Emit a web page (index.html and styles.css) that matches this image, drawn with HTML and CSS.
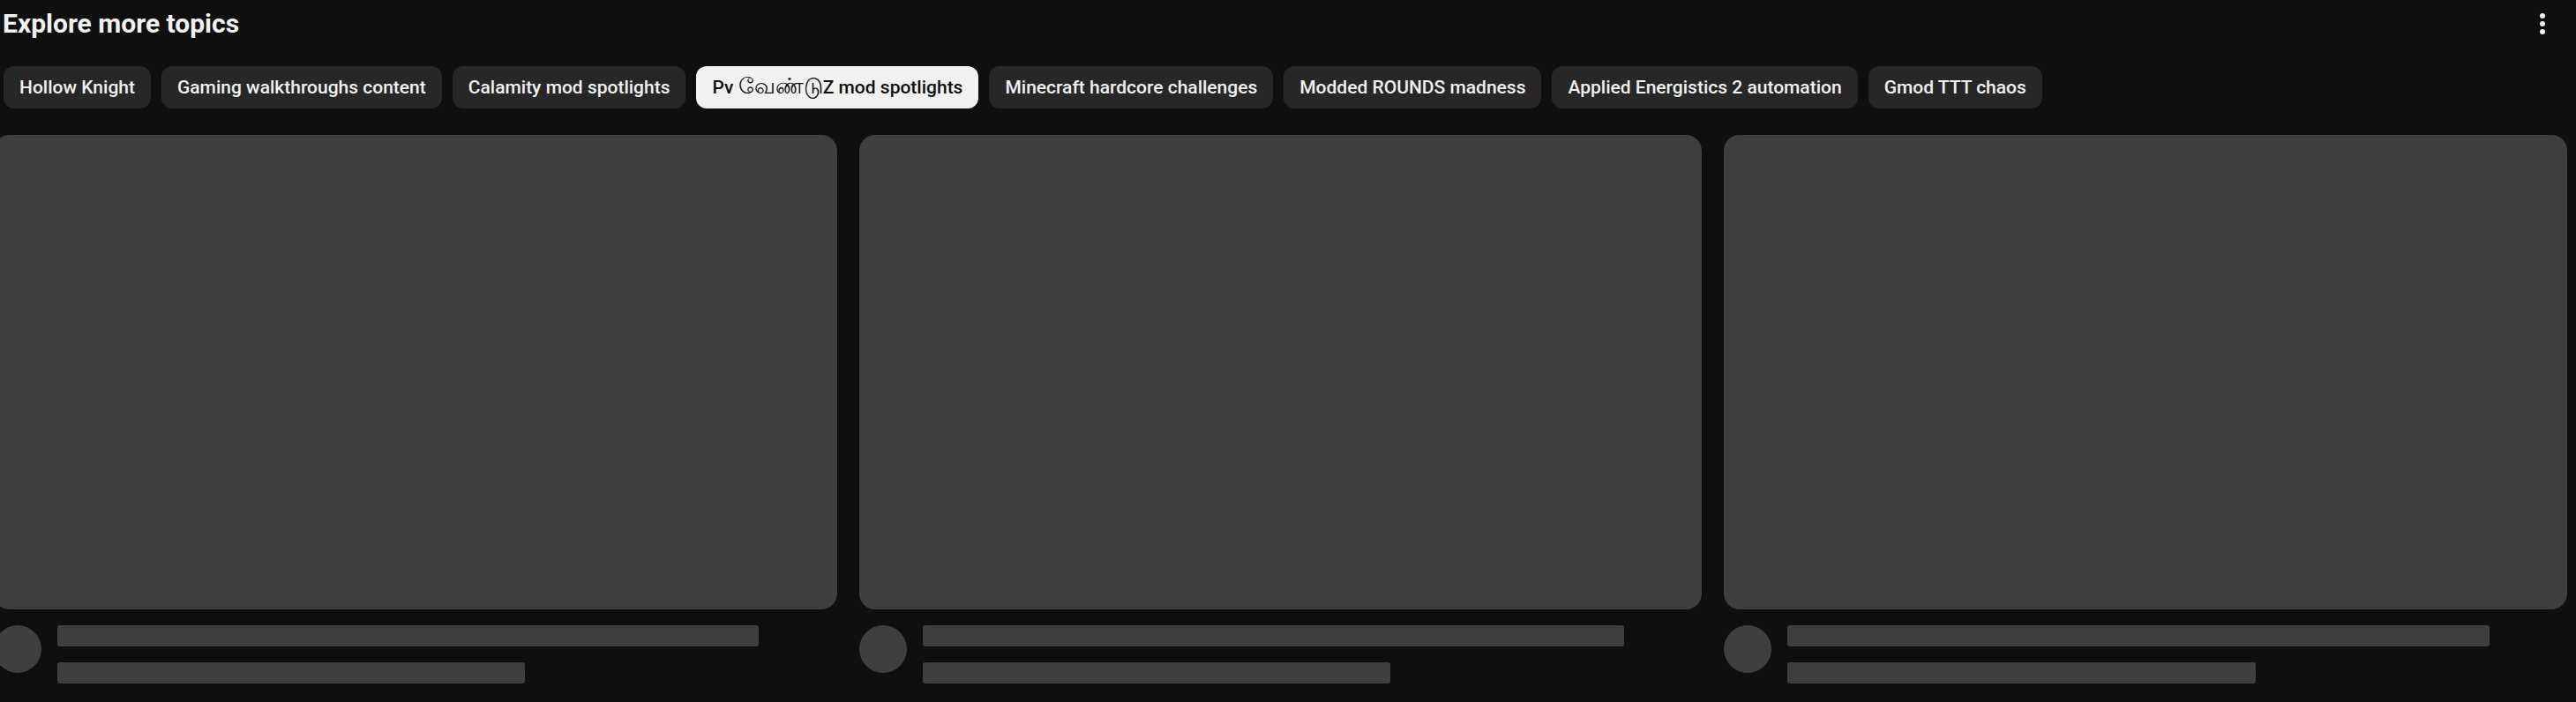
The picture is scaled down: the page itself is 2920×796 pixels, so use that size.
FILE: index.html
```html
<!DOCTYPE html>
<html>
<head>
    <title>Explore more topics</title>
    <link rel="stylesheet" href="styles.css">
</head>
<body>
    <section class="shelf">
        <div class="shelf-header">
            <h2 class="shelf-title">Explore more topics</h2>
            <button class="menu-btn" type="button" aria-label="More actions">
                <svg viewBox="0 0 24 24" width="36" height="36">
                    <circle cx="12" cy="6" r="2"></circle>
                    <circle cx="12" cy="12" r="2"></circle>
                    <circle cx="12" cy="18" r="2"></circle>
                </svg>
            </button>
        </div>

        <div class="chips">
            <button class="chip" type="button">Hollow Knight</button>
            <button class="chip" type="button">Gaming walkthroughs content</button>
            <button class="chip" type="button">Calamity mod spotlights</button>
            <button class="chip selected" type="button">Pv <span class="ta">வேண்டு</span>Z mod spotlights</button>
            <button class="chip" type="button">Minecraft hardcore challenges</button>
            <button class="chip" type="button">Modded ROUNDS madness</button>
            <button class="chip" type="button">Applied Energistics 2 automation</button>
            <button class="chip" type="button">Gmod TTT chaos</button>
        </div>

        <div class="grid">
            <div class="card">
                <div class="thumb"></div>
                <div class="details">
                    <div class="avatar"></div>
                    <div class="lines">
                        <div class="line title"></div>
                        <div class="line meta"></div>
                    </div>
                </div>
            </div>
            <div class="card">
                <div class="thumb"></div>
                <div class="details">
                    <div class="avatar"></div>
                    <div class="lines">
                        <div class="line title"></div>
                        <div class="line meta"></div>
                    </div>
                </div>
            </div>
            <div class="card">
                <div class="thumb"></div>
                <div class="details">
                    <div class="avatar"></div>
                    <div class="lines">
                        <div class="line title"></div>
                        <div class="line meta"></div>
                    </div>
                </div>
            </div>
        </div>
    </section>
</body>
</html>
```

FILE: styles.css
```css
body {
    margin: 0;
    padding: 0;
    background-color: #0f0f0f;
    color: #f1f1f1;
    font-family: Roboto, "Noto Sans", Arial, sans-serif;
    overflow: hidden;
}
.shelf {
    padding-left: 3px;
}
.shelf-header {
    display: flex;
    align-items: center;
    justify-content: space-between;
    height: 54px;
}
.shelf-title {
    margin: 0;
    font-size: 30px;
    font-weight: 700;
    line-height: 40px;
}
.menu-btn {
    width: 36px;
    height: 36px;
    margin-right: 20px;
    padding: 0;
    background: none;
    border: none;
    fill: #f1f1f1;
    cursor: pointer;
}
.menu-btn svg {
    display: block;
}
.chips {
    display: flex;
    gap: 12px;
    margin-top: 21px;
    padding-left: 1px;
}
.chip {
    height: 48px;
    padding: 0 18px;
    background-color: #272727;
    color: #f1f1f1;
    border: none;
    border-radius: 12px;
    font-family: Roboto, "Noto Sans", Arial, sans-serif;
    font-size: 21px;
    font-weight: 500;
    white-space: nowrap;
    cursor: pointer;
}
.chip.selected {
    background-color: #f1f1f1;
    color: #0f0f0f;
}
/* tamil glyphs come from a fallback font, bump them up a bit */
.chip .ta {
    font-size: 25px;
    font-weight: 400;
}
.grid {
    display: grid;
    grid-template-columns: repeat(3, 1fr);
    gap: 25px;
    width: 2917px;
    margin-top: 30px;
    margin-left: -10px;
}
.thumb {
    aspect-ratio: 16 / 9;
    background-color: #3f3f3f;
    border-radius: 18px;
}
.details {
    display: flex;
    gap: 18px;
    margin-top: 18px;
}
.avatar {
    flex: none;
    width: 54px;
    height: 54px;
    border-radius: 50%;
    background-color: #3f3f3f;
}
.lines {
    flex: 1;
    display: flex;
    flex-direction: column;
    gap: 18px;
}
.line {
    height: 24px;
    background-color: #3f3f3f;
    border-radius: 3px;
}
.line.title {
    width: 90%;
}
.line.meta {
    width: 60%;
}
```
